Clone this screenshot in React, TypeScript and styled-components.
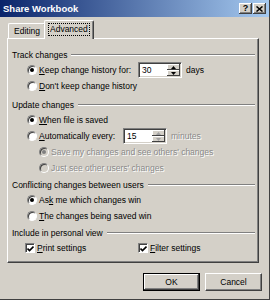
import React from 'react';
import styled, {createGlobalStyle} from 'styled-components';

const GlobalStyle = createGlobalStyle`
  html, body {
    margin: 0;
    padding: 0;
    background: #d4d0c8;
  }
  body {
    font-family: "Liberation Sans", Arial, sans-serif;
  }
`

const Window = styled.div`
  width: 270px;
  height: 300px;
  box-sizing: border-box;
  background: #d4d0c8;
  border-right: 1px solid #404040;
  border-bottom: 1px solid #404040;
  display: flex;
  flex-direction: column;
  font-size: 8.5px;
  color: #000;
`

const TitleBar = styled.div`
  height: 17px;
  flex-shrink: 0;
  background: linear-gradient(to right, #0a246a, #a6caf0);
  display: flex;
  align-items: center;
  justify-content: space-between;
  padding: 0 3px 0 3px;
`

const TitleText = styled.span`
  color: #fff;
  font-weight: bold;
  font-size: 9.5px;
`

const CaptionButtons = styled.div`
  display: flex;
  gap: 1px;
`

const CaptionButton = styled.div`
  width: 13px;
  height: 11px;
  background: #d4d0c8;
  box-shadow: inset -1px -1px #404040, inset 1px 1px #fff, inset -2px -2px #808080;
  display: flex;
  align-items: center;
  justify-content: center;
  font-weight: bold;
  font-size: 9px;
  line-height: 1;
`

const TabsRow = styled.div`
  display: flex;
  align-items: flex-end;
  padding: 3px 0 0 8px;
  height: 18px;
  flex-shrink: 0;
`

const Tab = styled.div<{ $active?: boolean }>`
  position: relative;
  z-index: ${p => p.$active ? 2 : 1};
  height: ${p => p.$active ? 19 : 15}px;
  margin-bottom: ${p => p.$active ? -1 : 0}px;
  margin-left: ${p => p.$active ? -2 : 0}px;
  padding: 0 ${p => p.$active ? 4 : 5}px;
  box-sizing: border-box;
  background: #d4d0c8;
  border-top: 1px solid #fff;
  border-left: 1px solid #fff;
  border-right: 1px solid #404040;
  border-radius: 2px 2px 0 0;
  box-shadow: inset -1px 0 #808080;
  display: flex;
  align-items: ${p => p.$active ? 'flex-start' : 'center'};
  padding-top: ${p => p.$active ? 3 : 0}px;
`

const FocusLabel = styled.span`
  outline: 1px dotted #000;
  outline-offset: 0;
  padding: 0 1px;
  line-height: 11px;
`

const Panel = styled.div`
  margin: 0 10px 0 7px;
  height: 225px;
  box-sizing: border-box;
  border-top: 1px solid #fff;
  border-left: 1px solid #fff;
  border-right: 1px solid #404040;
  border-bottom: 1px solid #404040;
  box-shadow: inset -1px -1px #808080;
  padding: 8px 0 0 4px;
  display: flex;
  flex-direction: column;
`

const GroupHeader = styled.div<{ $gap?: number }>`
  display: flex;
  align-items: center;
  height: 15px;
  margin-top: ${p => p.$gap || 0}px;
  &::after {
    content: '';
    flex: 1;
    height: 0;
    border-top: 1px solid #808080;
    border-bottom: 1px solid #fff;
    margin: 0 3px 0 4px;
  }
`

const OptionRow = styled.div<{ $indent: number; $disabled?: boolean }>`
  display: flex;
  align-items: center;
  height: 16px;
  padding-left: ${p => p.$indent}px;
  color: ${p => p.$disabled ? '#8a8a8a' : '#000'};
  text-shadow: ${p => p.$disabled ? '1px 1px 0 #fff' : 'none'};
`

const Radio = styled.span<{ $checked?: boolean; $disabled?: boolean }>`
  width: 10px;
  height: 10px;
  box-sizing: border-box;
  border-radius: 50%;
  border: 1px solid;
  border-color: #808080 #fff #fff #808080;
  box-shadow: inset 1px 1px #404040;
  background: ${p => p.$disabled ? '#d4d0c8' : '#fff'};
  margin-right: 2px;
  display: flex;
  align-items: center;
  justify-content: center;
  flex-shrink: 0;
  &::after {
    content: '';
    display: ${p => p.$checked ? 'block' : 'none'};
    width: 4px;
    height: 4px;
    border-radius: 50%;
    background: ${p => p.$disabled ? '#808080' : '#000'};
  }
`

const Check = styled.span`
  width: 10px;
  height: 10px;
  box-sizing: border-box;
  border: 1px solid;
  border-color: #808080 #fff #fff #808080;
  box-shadow: inset 1px 1px #404040;
  background: #fff;
  margin-right: 2px;
  display: flex;
  align-items: center;
  justify-content: center;
  flex-shrink: 0;
`

const Label = styled.span<{ $width?: number }>`
  width: ${p => p.$width ? p.$width + 'px' : 'auto'};
  white-space: nowrap;
`

const U = styled.span`
  text-decoration: underline;
`

const SpinBox = styled.div`
  width: 44px;
  height: 16px;
  box-sizing: border-box;
  background: #fff;
  border: 1px solid;
  border-color: #808080 #fff #fff #808080;
  box-shadow: inset 1px 1px #404040, inset -1px -1px #d4d0c8;
  display: flex;
  align-items: center;
  padding: 1px 1px 1px 3px;
  margin-right: 4px;
  color: #000;
  text-shadow: none;
`

const SpinValue = styled.span`
  flex: 1;
`

const SpinButtons = styled.div`
  width: 13px;
  height: 12px;
  display: flex;
  flex-direction: column;
`

const SpinButton = styled.div<{ $dim?: boolean }>`
  flex: 1;
  background: #d4d0c8;
  box-shadow: inset -1px -1px #404040, inset 1px 1px #fff;
  display: flex;
  align-items: center;
  justify-content: center;
  color: ${p => p.$dim ? '#a0a0a0' : '#000'};
`

const DisabledText = styled.span`
  color: #8a8a8a;
  text-shadow: 1px 1px 0 #fff;
`

const CheckGrid = styled.div`
  display: grid;
  grid-template-columns: 113px 1fr;
  padding-left: 13px;
`

const ButtonRow = styled.div`
  display: flex;
  justify-content: flex-end;
  gap: 5px;
  padding: 10px 7px 0 0;
`

const DialogButton = styled.div<{ $default?: boolean }>`
  width: 57px;
  height: 18px;
  box-sizing: border-box;
  background: #d4d0c8;
  border: 1px solid ${p => p.$default ? '#000' : '#fff'};
  ${p => !p.$default && 'border-right-color: #404040; border-bottom-color: #404040;'}
  box-shadow: ${p => p.$default
    ? 'inset -1px -1px #404040, inset 1px 1px #fff, inset -2px -2px #808080'
    : 'inset -1px -1px #808080'};
  display: flex;
  align-items: center;
  justify-content: center;
`

const Arrow = ({up}: { up?: boolean }) => (
  <svg width="5" height="3" viewBox="0 0 5 3">
    <path d={up ? 'M2.5 0 L5 3 L0 3 Z' : 'M0 0 L5 0 L2.5 3 Z'} fill="currentColor"/>
  </svg>
)

const Spin = ({value, dim}: { value: string; dim?: boolean }) => (
  <SpinBox>
    <SpinValue>{value}</SpinValue>
    <SpinButtons>
      <SpinButton $dim={dim}><Arrow up/></SpinButton>
      <SpinButton $dim={dim}><Arrow/></SpinButton>
    </SpinButtons>
  </SpinBox>
)

const Tick = () => (
  <svg width="7" height="7" viewBox="0 0 7 7">
    <path d="M0.5 3.5 L2.5 5.5 L6.5 1.5" stroke="#000" strokeWidth="1.6" fill="none"/>
  </svg>
)

export default function App() {
  return (
    <>
      <GlobalStyle/>
      <Window>
        <TitleBar>
          <TitleText>Share Workbook</TitleText>
          <CaptionButtons>
            <CaptionButton>?</CaptionButton>
            <CaptionButton>
              <svg width="7" height="6" viewBox="0 0 7 6">
                <path d="M0.5 0.5 L6.5 5.5 M6.5 0.5 L0.5 5.5" stroke="#000" strokeWidth="1.5"/>
              </svg>
            </CaptionButton>
          </CaptionButtons>
        </TitleBar>

        <TabsRow>
          <Tab>Editing</Tab>
          <Tab $active><FocusLabel>Advanced</FocusLabel></Tab>
        </TabsRow>

        <Panel>
          <GroupHeader>Track changes</GroupHeader>
          <OptionRow $indent={15}>
            <Radio $checked/>
            <Label $width={99}><U>K</U>eep change history for:</Label>
            <Spin value="30"/>
            <span>days</span>
          </OptionRow>
          <OptionRow $indent={15}>
            <Radio/>
            <Label><U>D</U>on't keep change history</Label>
          </OptionRow>

          <GroupHeader $gap={3}>Update changes</GroupHeader>
          <OptionRow $indent={15}>
            <Radio $checked/>
            <Label><U>W</U>hen file is saved</Label>
          </OptionRow>
          <OptionRow $indent={15}>
            <Radio/>
            <Label $width={84}><U>A</U>utomatically every:</Label>
            <Spin value="15" dim/>
            <DisabledText>minutes</DisabledText>
          </OptionRow>
          <OptionRow $indent={27} $disabled>
            <Radio $checked $disabled/>
            <Label>Save my changes and see others' changes</Label>
          </OptionRow>
          <OptionRow $indent={27} $disabled>
            <Radio $disabled/>
            <Label>Just see other users' changes</Label>
          </OptionRow>

          <GroupHeader $gap={1}>Conflicting changes between users</GroupHeader>
          <OptionRow $indent={15}>
            <Radio $checked/>
            <Label>As<U>k</U> me which changes win</Label>
          </OptionRow>
          <OptionRow $indent={15}>
            <Radio/>
            <Label><U>T</U>he changes being saved win</Label>
          </OptionRow>

          <GroupHeader $gap={1}>Include in personal view</GroupHeader>
          <CheckGrid>
            <OptionRow $indent={0}>
              <Check><Tick/></Check>
              <Label><U>P</U>rint settings</Label>
            </OptionRow>
            <OptionRow $indent={0}>
              <Check><Tick/></Check>
              <Label><U>F</U>ilter settings</Label>
            </OptionRow>
          </CheckGrid>
        </Panel>

        <ButtonRow>
          <DialogButton $default>OK</DialogButton>
          <DialogButton>Cancel</DialogButton>
        </ButtonRow>
      </Window>
    </>
  );
}
